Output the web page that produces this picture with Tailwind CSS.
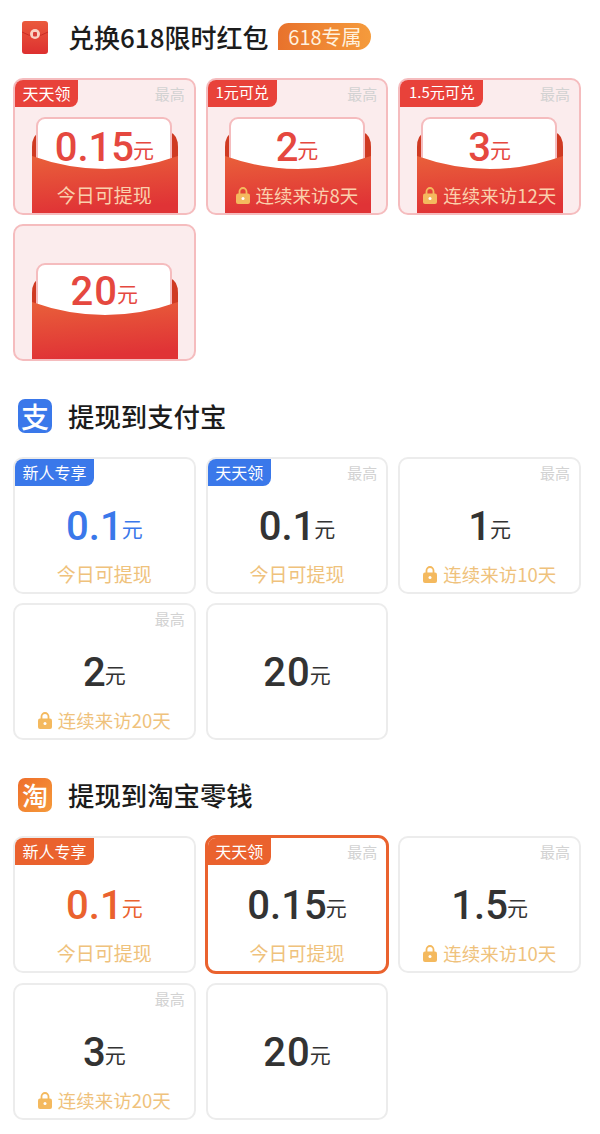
<!DOCTYPE html>
<html lang="zh-CN">
<head>
  <meta charset="UTF-8">
  <meta name="viewport" content="width=device-width, initial-scale=1.0">
  <title>提现</title>
  <script src="https://cdn.jsdelivr.net/npm/@tailwindcss/browser@4"></script>
</head>
<body class="bg-white font-['Noto_Sans_CJK_SC',sans-serif]">
  <div class="w-[600px] h-[1134px] overflow-hidden pl-[13px] pr-[19px] pt-[20px]">

    <!-- Red packets -->
    <section>
      <div class="flex items-center h-[34px] mb-[24px]">
        <svg class="ml-[9px] mr-[20px]" width="26" height="33" viewBox="0 0 26 33">
          <defs><linearGradient id="ic" x1="0" y1="0" x2="0" y2="1"><stop offset="0" stop-color="#ea5a3c"/><stop offset="1" stop-color="#dd3030"/></linearGradient></defs>
          <rect width="26" height="33" rx="3" fill="url(#ic)"/>
          <path d="M0 11 Q13 19 26 11" fill="none" stroke="#c92c24" stroke-width="1"/>
          <circle cx="13" cy="13" r="5" fill="#f9d3c4"/>
          <rect x="11" y="11" width="4" height="4.5" rx="1" fill="#d9403a"/>
        </svg>
        <h2 class="text-[26px] leading-[34px] font-medium text-[#1c1c1c]">兑换618限时红包</h2>
        <span class="ml-[10px] -mt-px w-[93px] h-[27px] flex items-center justify-center rounded-tl-[11px] rounded-tr-[14px] rounded-br-[14px] bg-gradient-to-r from-[#e8722c] to-[#f59b3c] text-[20px] leading-[27px] text-[#fff1de]">618专属</span>
      </div>
      <div class="grid grid-cols-3 gap-x-[10px] gap-y-[9px]">

        <div class="relative h-[137px] rounded-[10px] border-2 border-[#f5bcbe] bg-[#fbeced] overflow-hidden flex flex-col items-center">
          <svg class="absolute bottom-0 left-[17px]" width="146" height="96" viewBox="0 0 146 96">
            <defs><linearGradient id="fr" x1="0" y1="0" x2="0.2" y2="1"><stop offset="0" stop-color="#e9603a"/><stop offset="1" stop-color="#e03336"/></linearGradient></defs>
            <path d="M0 96V30Q0 18 8 15H138Q146 18 146 30V96Z" fill="#cf3a22"/>
            <rect x="5" y="1" width="134" height="80" rx="8" fill="#fff" stroke="#f5bcbe" stroke-width="2"/>
            <path d="M0 39Q73 65 146 39V96H0Z" fill="url(#fr)"/>
          </svg>
          <span class="absolute top-0 left-0 h-[27px] w-[63px] pb-[2px] flex items-center justify-center rounded-br-[8px] bg-[#e8423a] text-white text-[16px]">天天领</span>
          <span class="absolute top-[3px] right-[9px] text-[15px] leading-[22px] text-[#d2d2d2]">最高</span>
          <div class="relative mt-[48px] h-[40px] flex items-baseline text-[#e5483f]"><span class="font-[Roboto] text-[40px] leading-[40px] font-medium">0.15</span><span class="-ml-px -translate-y-[3px] text-[21px] leading-[40px]">元</span></div>
          <div class="relative mt-[15px] h-[24px] flex items-center text-[19px] leading-[24px] text-[#fad0ad]">今日可提现</div>
        </div>

        <div class="relative h-[137px] rounded-[10px] border-2 border-[#f5bcbe] bg-[#fbeced] overflow-hidden flex flex-col items-center">
          <svg class="absolute bottom-0 left-[17px]" width="146" height="96" viewBox="0 0 146 96">
            <path d="M0 96V30Q0 18 8 15H138Q146 18 146 30V96Z" fill="#cf3a22"/>
            <rect x="5" y="1" width="134" height="80" rx="8" fill="#fff" stroke="#f5bcbe" stroke-width="2"/>
            <path d="M0 39Q73 65 146 39V96H0Z" fill="url(#fr)"/>
          </svg>
          <span class="absolute top-0 left-0 h-[27px] w-[69px] pb-[2px] flex items-center justify-center rounded-br-[8px] bg-[#e8423a] text-white text-[15px]">1元可兑</span>
          <span class="absolute top-[3px] right-[9px] text-[15px] leading-[22px] text-[#d2d2d2]">最高</span>
          <div class="relative mt-[48px] h-[40px] flex items-baseline text-[#e5483f]"><span class="font-[Roboto] text-[40px] leading-[40px] font-medium">2</span><span class="-ml-px -translate-y-[3px] text-[21px] leading-[40px]">元</span></div>
          <div class="relative mt-[15px] h-[24px] flex items-center gap-[6px] text-[18.5px] leading-[24px] text-[#fad0ad]">
            <svg width="14" height="17" viewBox="0 0 14 17"><path d="M3.5 8V4.5a3.5 3.5 0 0 1 7 0V8" fill="none" stroke="#f4b95e" stroke-width="1.8"/><rect y="6.5" width="14" height="10.5" rx="2" fill="#f4b95e"/><circle cx="7" cy="11.5" r="1.5" fill="#fff"/></svg>
            连续来访8天
          </div>
        </div>

        <div class="relative h-[137px] rounded-[10px] border-2 border-[#f5bcbe] bg-[#fbeced] overflow-hidden flex flex-col items-center">
          <svg class="absolute bottom-0 left-[17px]" width="146" height="96" viewBox="0 0 146 96">
            <path d="M0 96V30Q0 18 8 15H138Q146 18 146 30V96Z" fill="#cf3a22"/>
            <rect x="5" y="1" width="134" height="80" rx="8" fill="#fff" stroke="#f5bcbe" stroke-width="2"/>
            <path d="M0 39Q73 65 146 39V96H0Z" fill="url(#fr)"/>
          </svg>
          <span class="absolute top-0 left-0 h-[27px] w-[83px] pb-[2px] flex items-center justify-center rounded-br-[8px] bg-[#e8423a] text-white text-[15px]">1.5元可兑</span>
          <span class="absolute top-[3px] right-[9px] text-[15px] leading-[22px] text-[#d2d2d2]">最高</span>
          <div class="relative mt-[48px] h-[40px] flex items-baseline text-[#e5483f]"><span class="font-[Roboto] text-[40px] leading-[40px] font-medium">3</span><span class="-ml-px -translate-y-[3px] text-[21px] leading-[40px]">元</span></div>
          <div class="relative mt-[15px] h-[24px] flex items-center gap-[6px] text-[18.5px] leading-[24px] text-[#fad0ad]">
            <svg width="14" height="17" viewBox="0 0 14 17"><path d="M3.5 8V4.5a3.5 3.5 0 0 1 7 0V8" fill="none" stroke="#f4b95e" stroke-width="1.8"/><rect y="6.5" width="14" height="10.5" rx="2" fill="#f4b95e"/><circle cx="7" cy="11.5" r="1.5" fill="#fff"/></svg>
            连续来访12天
          </div>
        </div>

        <div class="relative h-[137px] rounded-[10px] border-2 border-[#f5bcbe] bg-[#fbeced] overflow-hidden flex flex-col items-center">
          <svg class="absolute bottom-0 left-[17px]" width="146" height="96" viewBox="0 0 146 96">
            <path d="M0 96V30Q0 18 8 15H138Q146 18 146 30V96Z" fill="#cf3a22"/>
            <rect x="5" y="1" width="134" height="80" rx="8" fill="#fff" stroke="#f5bcbe" stroke-width="2"/>
            <path d="M0 39Q73 65 146 39V96H0Z" fill="url(#fr)"/>
          </svg>
          <div class="relative mt-[46px] h-[40px] flex items-baseline text-[#e5483f]"><span class="font-[Roboto] text-[40px] leading-[40px] font-medium tracking-[1px]">20</span><span class="-ml-px -translate-y-[3px] text-[21px] leading-[40px]">元</span></div>
        </div>
      </div>
    </section>

    <!-- Alipay -->
    <section class="mt-[38px]">
      <div class="flex items-center h-[34px] mb-[24px]">
        <span class="ml-[5px] mr-[16px] w-[34px] h-[34px] rounded-[7px] bg-[#3a78ea] flex items-center justify-center text-white text-[28px] leading-[34px] font-medium">支</span>
        <h2 class="text-[26.4px] leading-[34px] font-medium text-[#1c1c1c]">提现到支付宝</h2>
      </div>
      <div class="grid grid-cols-3 gap-x-[10px] gap-y-[9px]">

        <div class="relative h-[137px] rounded-[10px] border-2 border-[#ececec] bg-white overflow-hidden flex flex-col items-center">
          <span class="absolute top-0 left-0 h-[27px] w-[79px] pb-[2px] flex items-center justify-center rounded-br-[8px] bg-[#3a78ea] text-white text-[16px]">新人专享</span>
          <div class="relative mt-[48px] h-[40px] flex items-baseline text-[#3a78ea]"><span class="font-[Roboto] text-[40px] leading-[40px] font-medium">0.1</span><span class="-ml-px -translate-y-[3px] text-[21px] leading-[40px]">元</span></div>
          <div class="relative mt-[15px] h-[24px] flex items-center text-[19px] leading-[24px] text-[#efc27c]">今日可提现</div>
        </div>

        <div class="relative h-[137px] rounded-[10px] border-2 border-[#ececec] bg-white overflow-hidden flex flex-col items-center">
          <span class="absolute top-0 left-0 h-[27px] w-[63px] pb-[2px] flex items-center justify-center rounded-br-[8px] bg-[#3a78ea] text-white text-[16px]">天天领</span>
          <span class="absolute top-[3px] right-[9px] text-[15px] leading-[22px] text-[#d2d2d2]">最高</span>
          <div class="relative mt-[48px] h-[40px] flex items-baseline text-[#333]"><span class="font-[Roboto] text-[40px] leading-[40px] font-medium">0.1</span><span class="-ml-px -translate-y-[3px] text-[21px] leading-[40px]">元</span></div>
          <div class="relative mt-[15px] h-[24px] flex items-center text-[19px] leading-[24px] text-[#efc27c]">今日可提现</div>
        </div>

        <div class="relative h-[137px] rounded-[10px] border-2 border-[#ececec] bg-white overflow-hidden flex flex-col items-center">
          <span class="absolute top-[3px] right-[9px] text-[15px] leading-[22px] text-[#d2d2d2]">最高</span>
          <div class="relative mt-[48px] h-[40px] flex items-baseline text-[#333]"><span class="font-[Roboto] text-[40px] leading-[40px] font-medium">1</span><span class="-ml-px -translate-y-[3px] text-[21px] leading-[40px]">元</span></div>
          <div class="relative mt-[15px] h-[24px] flex items-center gap-[6px] text-[18.5px] leading-[24px] text-[#efc27c]">
            <svg width="14" height="17" viewBox="0 0 14 17"><path d="M3.5 8V4.5a3.5 3.5 0 0 1 7 0V8" fill="none" stroke="#f4b95e" stroke-width="1.8"/><rect y="6.5" width="14" height="10.5" rx="2" fill="#f4b95e"/><circle cx="7" cy="11.5" r="1.5" fill="#fff"/></svg>
            连续来访10天
          </div>
        </div>

        <div class="relative h-[137px] rounded-[10px] border-2 border-[#ececec] bg-white overflow-hidden flex flex-col items-center">
          <span class="absolute top-[3px] right-[9px] text-[15px] leading-[22px] text-[#d2d2d2]">最高</span>
          <div class="relative mt-[48px] h-[40px] flex items-baseline text-[#333]"><span class="font-[Roboto] text-[40px] leading-[40px] font-medium">2</span><span class="-ml-px -translate-y-[3px] text-[21px] leading-[40px]">元</span></div>
          <div class="relative mt-[15px] h-[24px] flex items-center gap-[6px] text-[18.5px] leading-[24px] text-[#efc27c]">
            <svg width="14" height="17" viewBox="0 0 14 17"><path d="M3.5 8V4.5a3.5 3.5 0 0 1 7 0V8" fill="none" stroke="#f4b95e" stroke-width="1.8"/><rect y="6.5" width="14" height="10.5" rx="2" fill="#f4b95e"/><circle cx="7" cy="11.5" r="1.5" fill="#fff"/></svg>
            连续来访20天
          </div>
        </div>

        <div class="relative h-[137px] rounded-[10px] border-2 border-[#ececec] bg-white overflow-hidden flex flex-col items-center">
          <div class="relative mt-[48px] h-[40px] flex items-baseline text-[#333]"><span class="font-[Roboto] text-[40px] leading-[40px] font-medium tracking-[1px]">20</span><span class="-ml-px -translate-y-[3px] text-[21px] leading-[40px]">元</span></div>
        </div>
      </div>
    </section>

    <!-- Taobao -->
    <section class="mt-[38px]">
      <div class="flex items-center h-[34px] mb-[24px]">
        <span class="ml-[5px] mr-[16px] w-[34px] h-[34px] rounded-[7px] bg-gradient-to-br from-[#ee6d2a] to-[#f59a3a] flex items-center justify-center text-white text-[26px] leading-[34px] font-medium">淘</span>
        <h2 class="text-[26.4px] leading-[34px] font-medium text-[#1c1c1c]">提现到淘宝零钱</h2>
      </div>
      <div class="grid grid-cols-3 gap-x-[10px] gap-y-[10px]">

        <div class="relative h-[137px] rounded-[10px] border-2 border-[#ececec] bg-white overflow-hidden flex flex-col items-center">
          <span class="absolute top-0 left-0 h-[27px] w-[79px] pb-[2px] flex items-center justify-center rounded-br-[8px] bg-[#ea622e] text-white text-[16px]">新人专享</span>
          <div class="relative mt-[48px] h-[40px] flex items-baseline text-[#ea622e]"><span class="font-[Roboto] text-[40px] leading-[40px] font-medium">0.1</span><span class="-ml-px -translate-y-[3px] text-[21px] leading-[40px]">元</span></div>
          <div class="relative mt-[15px] h-[24px] flex items-center text-[19px] leading-[24px] text-[#efc27c]">今日可提现</div>
        </div>

        <div class="relative h-[139px] -my-px -mx-px rounded-[11px] border-[3px] border-[#ea622e] bg-white overflow-hidden flex flex-col items-center">
          <span class="absolute top-0 left-0 h-[27px] w-[63px] pb-[2px] flex items-center justify-center rounded-br-[8px] bg-[#ea622e] text-white text-[16px]">天天领</span>
          <span class="absolute top-[3px] right-[9px] text-[15px] leading-[22px] text-[#d2d2d2]">最高</span>
          <div class="relative mt-[48px] h-[40px] flex items-baseline text-[#333]"><span class="font-[Roboto] text-[40px] leading-[40px] font-medium">0.15</span><span class="-ml-px -translate-y-[3px] text-[21px] leading-[40px]">元</span></div>
          <div class="relative mt-[15px] h-[24px] flex items-center text-[19px] leading-[24px] text-[#efc27c]">今日可提现</div>
        </div>

        <div class="relative h-[137px] rounded-[10px] border-2 border-[#ececec] bg-white overflow-hidden flex flex-col items-center">
          <span class="absolute top-[3px] right-[9px] text-[15px] leading-[22px] text-[#d2d2d2]">最高</span>
          <div class="relative mt-[48px] h-[40px] flex items-baseline text-[#333]"><span class="font-[Roboto] text-[40px] leading-[40px] font-medium">1.5</span><span class="-ml-px -translate-y-[3px] text-[21px] leading-[40px]">元</span></div>
          <div class="relative mt-[15px] h-[24px] flex items-center gap-[6px] text-[18.5px] leading-[24px] text-[#efc27c]">
            <svg width="14" height="17" viewBox="0 0 14 17"><path d="M3.5 8V4.5a3.5 3.5 0 0 1 7 0V8" fill="none" stroke="#f4b95e" stroke-width="1.8"/><rect y="6.5" width="14" height="10.5" rx="2" fill="#f4b95e"/><circle cx="7" cy="11.5" r="1.5" fill="#fff"/></svg>
            连续来访10天
          </div>
        </div>

        <div class="relative h-[137px] rounded-[10px] border-2 border-[#ececec] bg-white overflow-hidden flex flex-col items-center">
          <span class="absolute top-[3px] right-[9px] text-[15px] leading-[22px] text-[#d2d2d2]">最高</span>
          <div class="relative mt-[48px] h-[40px] flex items-baseline text-[#333]"><span class="font-[Roboto] text-[40px] leading-[40px] font-medium">3</span><span class="-ml-px -translate-y-[3px] text-[21px] leading-[40px]">元</span></div>
          <div class="relative mt-[15px] h-[24px] flex items-center gap-[6px] text-[18.5px] leading-[24px] text-[#efc27c]">
            <svg width="14" height="17" viewBox="0 0 14 17"><path d="M3.5 8V4.5a3.5 3.5 0 0 1 7 0V8" fill="none" stroke="#f4b95e" stroke-width="1.8"/><rect y="6.5" width="14" height="10.5" rx="2" fill="#f4b95e"/><circle cx="7" cy="11.5" r="1.5" fill="#fff"/></svg>
            连续来访20天
          </div>
        </div>

        <div class="relative h-[137px] rounded-[10px] border-2 border-[#ececec] bg-white overflow-hidden flex flex-col items-center">
          <div class="relative mt-[48px] h-[40px] flex items-baseline text-[#333]"><span class="font-[Roboto] text-[40px] leading-[40px] font-medium tracking-[1px]">20</span><span class="-ml-px -translate-y-[3px] text-[21px] leading-[40px]">元</span></div>
        </div>
      </div>
    </section>

  </div>
</body>
</html>
